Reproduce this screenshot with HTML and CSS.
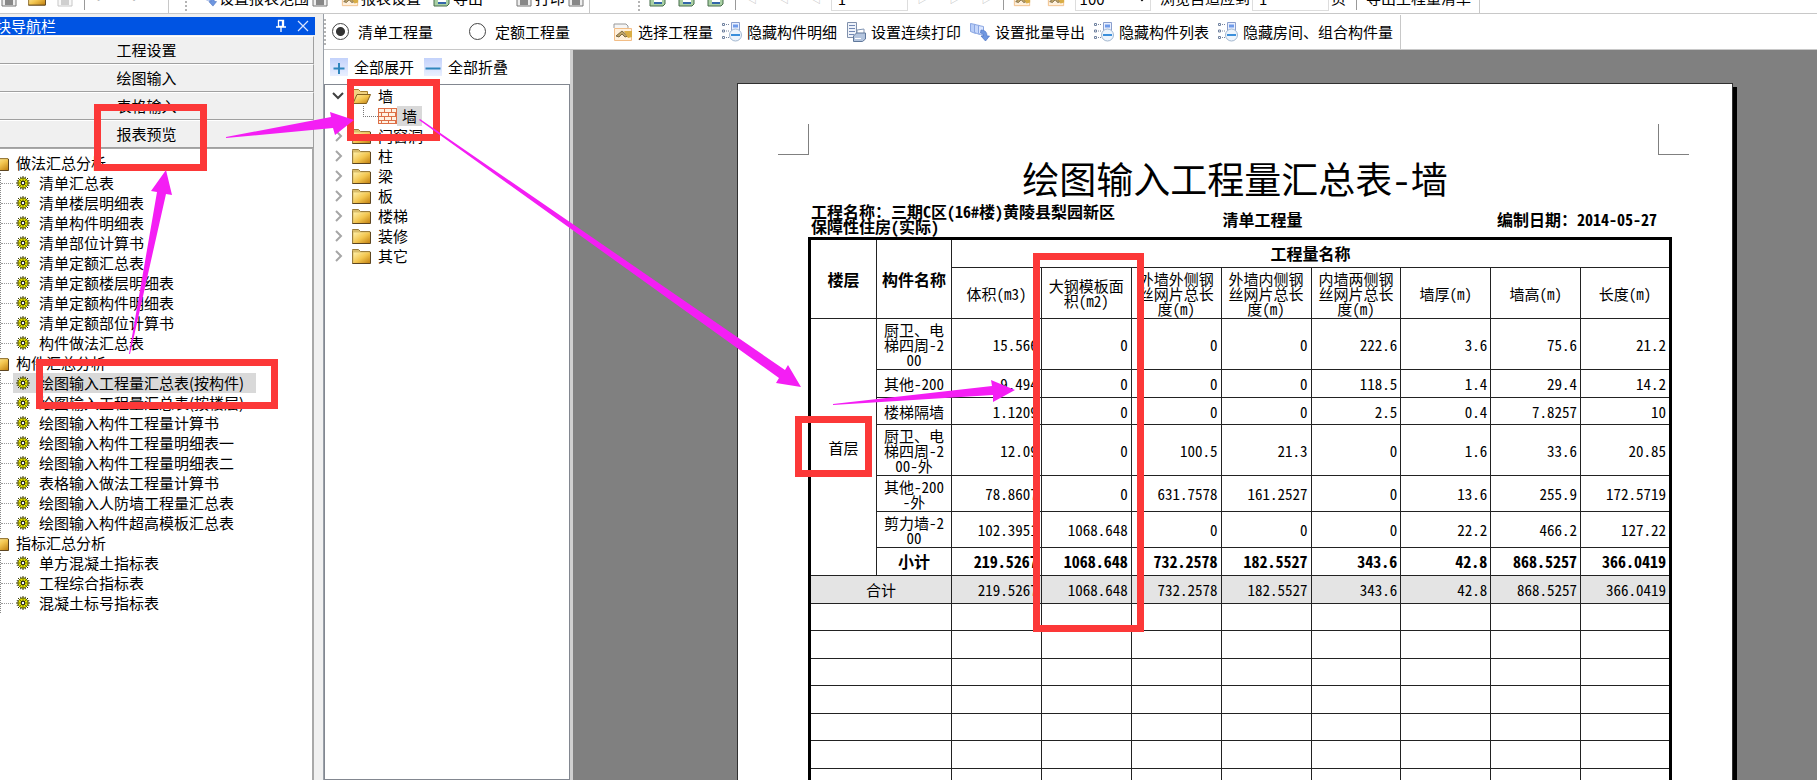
FILE: index.html
```
<!DOCTYPE html>
<html lang="zh-CN">
<head>
<meta charset="utf-8">
<title>报表预览</title>
<link rel="stylesheet" href="styles.css">
</head>
<body>
<svg class="defs" aria-hidden="true">
  <defs>
    <linearGradient id="gold" x1="0" y1="0" x2="1" y2="1"><stop offset="0" stop-color="#fff0a8"/><stop offset=".5" stop-color="#f3c650"/><stop offset="1" stop-color="#c07f10"/></linearGradient>
    <linearGradient id="sky" x1="0" y1="0" x2="0" y2="1"><stop offset="0" stop-color="#c3d2fb"/><stop offset="1" stop-color="#eaf0ff"/></linearGradient>
    <symbol id="folder" viewBox="0 0 19 16"><path d="M.5 2.500V1.500h6l2 2h9.500v12H.5z" fill="#d9bd6a" stroke="#9a7c3c"/><path d="M1.500 4.500h16.500v11H1.500z" fill="url(#gold)"/><path d="M18.500 4v11.500H.5" fill="none" stroke="#5d4520"/></symbol>
    <symbol id="folder-open" viewBox="0 0 19 16"><path d="M.5 15V1.500h6l2 2h7V7" fill="#f1d382" stroke="#a8802c"/><path d="M1 15.500L5 6.500h13.500l-4 9z" fill="url(#gold)" stroke="#83601f"/></symbol>
    <symbol id="wall" viewBox="0 0 19 16"><path d="M0 0h19v16H0z" fill="#dd7048"/><path d="M1 1h5v3H1zm6 0h6v3H7zm7 0h4v3h-4zM1 5h2v3H1zm3 0h6v3H4zm7 0h6v3h-6zM1 9h5v3H1zm6 0h6v3H7zm7 0h4v3h-4zM1 13h2v2H1zm3 0h6v2H4zm7 0h6v2h-6z" fill="#fff1e2"/></symbol>
    <symbol id="gear" viewBox="0 0 14 14"><path d="M7 0v14M0 7h14M2 2l10 10M12 2L2 12M4.500.8l5 12.400M9.500.8l-5 12.400M.8 4.500l12.400 5M.8 9.500l12.400-5" stroke="#333300" stroke-width="1"/><circle cx="7" cy="7" r="5" fill="#e8e800" stroke="#4a4a00" stroke-width=".8"/><path d="M7 1.500v3M7 9.500v3M1.500 7h3M9.500 7h3M3.500 3.500l1.500 1.500M10.500 3.500L9 5M3.500 10.500L5 9M10.500 10.500L9 9" stroke="#777700"/><circle cx="7" cy="7" r="1.800" fill="#fff" stroke="#222" stroke-width="1.200"/></symbol>
    <symbol id="plus" viewBox="0 0 18 18"><path d="M0 0h18v18H0z" fill="url(#sky)"/><path d="M9 5v11M3.500 10.500h11" stroke="#2f86bd" stroke-width="2"/></symbol>
    <symbol id="minus" viewBox="0 0 18 18"><path d="M0 0h18v18H0z" fill="url(#sky)"/><path d="M1.500 10.500h15" stroke="#2f86bd" stroke-width="2"/></symbol>
    <symbol id="pick" viewBox="0 0 20 20"><path d="M1 6V2h12l2 2v3" fill="#f5f5f5" stroke="#999"/><path d="M1.500 6.500h17v12h-17z" fill="#fff0dc" stroke="#f2bd86"/><path d="M3 14l6-5 6 5-3 1-3-3-3 3z" fill="#bda268" stroke="#7d6a42"/><path d="M11 9h8v6l-4 1z" fill="#d9ad45"/></symbol>
    <symbol id="hide" viewBox="0 0 20 20"><path d="M.5 1.500h2v2h-2zM.5 8h2v2h-2zM.5 14.500h2v2h-2z" fill="#fff" stroke="#7082a0"/><path d="M4 2.500h3M4 9h3M4 15.500h3" stroke="#7886a0" stroke-dasharray="1 1"/><path d="M9.500.5h8v10h-8z" fill="#eaf0ff" stroke="#8b9fcc"/><path d="M11 2.500h5v3h-5z" fill="#6f9bea"/><circle cx="13.500" cy="13" r="6" fill="#edf4fc" stroke="#a2b7cf"/><path d="M9 13h9" stroke="#3b8fdb" stroke-width="2"/></symbol>
    <symbol id="printer" viewBox="0 0 20 20"><path d="M1.500.5h9v15h-9z" fill="#eff3fa" stroke="#8191ac"/><path d="M3 3.500h6M3 6.500h6M3 9.500h6M3 12.500h5" stroke="#7188b4"/><path d="M11 8l7-1v6h-7z" fill="#fff" stroke="#8296b4"/><path d="M7.500 14l3-3h9v6l-3 2.500h-9z" fill="#b4c5de" stroke="#60789b"/><path d="M9 16.500h6" stroke="#fff"/></symbol>
    <symbol id="batch" viewBox="0 0 20 20"><path d="M.5 1.500l5 1v9l-5-2z" fill="#b8cdf8" stroke="#8aa6e2"/><path d="M4.500 2.500l5 1v9l-5-2z" fill="#c6d7fa" stroke="#8aa6e2"/><path d="M8.500 3.500l5 1v9l-5-2z" fill="#dbe6ff" stroke="#8aa6e2"/><path d="M11 8q6 0 6 6h2.500L15.500 19 11 14h2.500q0-3-3-3z" fill="#6f97e0" stroke="#4d76c4" stroke-width=".7"/></symbol>
    <symbol id="sheet" viewBox="0 0 18 18"><path d="M1 1h15v14l-2 2H1z" fill="#a9d0a4" stroke="#466c4a"/><path d="M5 3h8v11H5z" fill="#fff"/><path d="M5 14h8" stroke="#3467a9" stroke-width="2"/></symbol>
    <symbol id="page-icon" viewBox="0 0 18 18"><path d="M2 1h14v16H2z" fill="#eee" stroke="#777"/><path d="M5 11h8v5H5z" fill="#888"/></symbol>
  </defs>
</svg>

<header class="topbar">
  <div class="group file-group">
    <svg class="icon18"><use href="#page-icon"/></svg><svg class="icon18"><use href="#folder"/></svg><svg class="icon18 faded"><use href="#page-icon"/></svg><span class="sep"></span><span class="dim">↶</span><span class="dim">↷</span>
  </div>
  <div class="group report-group">
    <span class="grip"></span>
    <button class="tool"><svg class="icon18"><use href="#batch"/></svg>设置报表范围<svg class="icon18"><use href="#page-icon"/></svg></button>
    <button class="tool"><svg class="icon18"><use href="#pick"/></svg>报表设置</button>
    <button class="tool"><svg class="icon18"><use href="#sheet"/></svg>导出</button>
    <button class="tool print-tool"><svg class="icon18"><use href="#page-icon"/></svg>打印<svg class="icon18"><use href="#page-icon"/></svg></button>
  </div>
  <div class="group view-group">
    <span class="grip"></span>
    <span class="sheets"><svg class="icon18"><use href="#sheet"/></svg><svg class="icon18"><use href="#sheet"/></svg><svg class="icon18"><use href="#sheet"/></svg></span>
    <span class="sep"></span>
    <span class="pager"><span>◁</span><span>◁</span><span>◁</span></span>
    <input class="page-input" aria-label="页码" value="1">
    <span class="pager"><span>▷</span><span>▷</span><span>▷</span></span>
    <span class="sep"></span>
    <span class="lenses"><svg class="icon18"><use href="#pick"/></svg><svg class="icon18"><use href="#pick"/></svg></span>
    <select class="zoom-select" aria-label="缩放"><option>100</option></select>
    <label class="fit">浏览自适应到<input class="page-input" value="1">页</label>
    <span class="sep"></span>
    <button class="tool">导出工程量清单</button>
  </div>
</header>

<div class="app">
  <aside class="nav">
    <div class="nav-title"><span class="nav-name">块导航栏</span>
      <button class="tiny" aria-label="固定"><svg viewBox="0 0 12 14"><path d="M3.500 1.500h5v6h-5zM1 8h10M6 8v5M7.500 2v5" fill="none" stroke="#fff" stroke-width="1.300"/></svg></button>
      <button class="tiny" aria-label="关闭"><svg viewBox="0 0 12 14"><path d="M1 2l10 10M11 2L1 12" stroke="#d8e4ff" stroke-width="1.200"/></svg></button>
    </div>
    <button class="module">工程设置</button>
    <button class="module">绘图输入</button>
    <button class="module">表格输入</button>
    <button class="module">报表预览</button>
    <div class="reports">
      <h3><svg><use href="#folder"/></svg>做法汇总分析</h3>
      <ul>
        <li><svg><use href="#gear"/></svg><a href="#">清单汇总表</a></li>
        <li><svg><use href="#gear"/></svg><a href="#">清单楼层明细表</a></li>
        <li><svg><use href="#gear"/></svg><a href="#">清单构件明细表</a></li>
        <li><svg><use href="#gear"/></svg><a href="#">清单部位计算书</a></li>
        <li><svg><use href="#gear"/></svg><a href="#">清单定额汇总表</a></li>
        <li><svg><use href="#gear"/></svg><a href="#">清单定额楼层明细表</a></li>
        <li><svg><use href="#gear"/></svg><a href="#">清单定额构件明细表</a></li>
        <li><svg><use href="#gear"/></svg><a href="#">清单定额部位计算书</a></li>
        <li><svg><use href="#gear"/></svg><a href="#">构件做法汇总表</a></li>
      </ul>
      <h3><svg><use href="#folder"/></svg>构件汇总分析</h3>
      <ul>
        <li class="selected"><svg><use href="#gear"/></svg><a href="#">绘图输入工程量汇总表(按构件)</a></li>
        <li><svg><use href="#gear"/></svg><a href="#">绘图输入工程量汇总表(按楼层)</a></li>
        <li><svg><use href="#gear"/></svg><a href="#">绘图输入构件工程量计算书</a></li>
        <li><svg><use href="#gear"/></svg><a href="#">绘图输入构件工程量明细表一</a></li>
        <li><svg><use href="#gear"/></svg><a href="#">绘图输入构件工程量明细表二</a></li>
        <li><svg><use href="#gear"/></svg><a href="#">表格输入做法工程量计算书</a></li>
        <li><svg><use href="#gear"/></svg><a href="#">绘图输入人防墙工程量汇总表</a></li>
        <li><svg><use href="#gear"/></svg><a href="#">绘图输入构件超高模板汇总表</a></li>
      </ul>
      <h3><svg><use href="#folder"/></svg>指标汇总分析</h3>
      <ul>
        <li><svg><use href="#gear"/></svg><a href="#">单方混凝土指标表</a></li>
        <li><svg><use href="#gear"/></svg><a href="#">工程综合指标表</a></li>
        <li><svg><use href="#gear"/></svg><a href="#">混凝土标号指标表</a></li>
      </ul>
    </div>
  </aside>

  <main class="work">
    <div class="toolbar">
      <span class="grip"></span>
      <label class="choice"><input type="radio" name="kind" checked>清单工程量</label>
      <label class="choice"><input type="radio" name="kind">定额工程量</label>
      <div class="actions">
        <button class="action"><svg><use href="#pick"/></svg>选择工程量</button>
        <button class="action"><svg><use href="#hide"/></svg>隐藏构件明细</button>
        <button class="action"><svg><use href="#printer"/></svg>设置连续打印</button>
        <button class="action"><svg><use href="#batch"/></svg>设置批量导出</button>
        <button class="action"><svg><use href="#hide"/></svg>隐藏构件列表</button>
        <button class="action"><svg><use href="#hide"/></svg>隐藏房间、组合构件量</button>
      </div>
    </div>
    <div class="panes">
      <section class="elements">
        <div class="fold-bar">
          <button class="fold"><svg><use href="#plus"/></svg>全部展开</button>
          <button class="fold"><svg><use href="#minus"/></svg>全部折叠</button>
        </div>
        <ul class="tree">
          <li class="open"><svg class="chev" viewBox="0 0 12 12"><path d="M1 3l5 5 5-5" /></svg><svg class="pic"><use href="#folder-open"/></svg><span>墙</span></li>
          <li class="child"><svg class="pic"><use href="#wall"/></svg><span class="chosen">墙</span></li>
          <li><svg class="chev" viewBox="0 0 12 12"><path d="M4 1l5 5-5 5"/></svg><svg class="pic"><use href="#folder"/></svg><span>门窗洞</span></li>
          <li><svg class="chev" viewBox="0 0 12 12"><path d="M4 1l5 5-5 5"/></svg><svg class="pic"><use href="#folder"/></svg><span>柱</span></li>
          <li><svg class="chev" viewBox="0 0 12 12"><path d="M4 1l5 5-5 5"/></svg><svg class="pic"><use href="#folder"/></svg><span>梁</span></li>
          <li><svg class="chev" viewBox="0 0 12 12"><path d="M4 1l5 5-5 5"/></svg><svg class="pic"><use href="#folder"/></svg><span>板</span></li>
          <li><svg class="chev" viewBox="0 0 12 12"><path d="M4 1l5 5-5 5"/></svg><svg class="pic"><use href="#folder"/></svg><span>楼梯</span></li>
          <li><svg class="chev" viewBox="0 0 12 12"><path d="M4 1l5 5-5 5"/></svg><svg class="pic"><use href="#folder"/></svg><span>装修</span></li>
          <li><svg class="chev" viewBox="0 0 12 12"><path d="M4 1l5 5-5 5"/></svg><svg class="pic"><use href="#folder"/></svg><span>其它</span></li>
        </ul>
      </section>
      <section class="viewer">
        <article class="paper">
          <div class="marks"><span class="mark left"></span><span class="mark right"></span></div>
          <h1>绘图输入工程量汇总表-墙</h1>
          <div class="meta">
            <p class="project">工程名称：三期C区(16#楼)黄陵县梨园新区<br>保障性住房(实际)</p>
            <p class="kind">清单工程量</p>
            <p class="date">编制日期：2014-05-27</p>
          </div>
          <table>
            <colgroup><col class="c-floor"><col class="c-name"><col span="8"></colgroup>
            <thead>
              <tr class="h29"><th rowspan="2">楼层</th><th rowspan="2">构件名称</th><th colspan="8">工程量名称</th></tr>
              <tr class="h51 units"><th>体积(m3)</th><th>大钢模板面<br>积(m2)</th><th>外墙外侧钢<br>丝网片总长<br>度(m)</th><th>外墙内侧钢<br>丝网片总长<br>度(m)</th><th>内墙两侧钢<br>丝网片总长<br>度(m)</th><th>墙厚(m)</th><th>墙高(m)</th><th>长度(m)</th></tr>
            </thead>
            <tbody>
              <tr class="h51"><td class="name" rowspan="7">首层</td><td class="name">厨卫、电<br>梯四周-2<br>00</td><td>15.566</td><td>0</td><td>0</td><td>0</td><td>222.6</td><td>3.6</td><td>75.6</td><td>21.2</td></tr>
              <tr class="h28"><td class="name">其他-200</td><td>9.494</td><td>0</td><td>0</td><td>0</td><td>118.5</td><td>1.4</td><td>29.4</td><td>14.2</td></tr>
              <tr class="h27"><td class="name">楼梯隔墙</td><td>1.1209</td><td>0</td><td>0</td><td>0</td><td>2.5</td><td>0.4</td><td>7.8257</td><td>10</td></tr>
              <tr class="h51"><td class="name">厨卫、电<br>梯四周-2<br>00-外</td><td>12.09</td><td>0</td><td>100.5</td><td>21.3</td><td>0</td><td>1.6</td><td>33.6</td><td>20.85</td></tr>
              <tr class="h36"><td class="name">其他-200<br>-外</td><td>78.8607</td><td>0</td><td>631.7578</td><td>161.2527</td><td>0</td><td>13.6</td><td>255.9</td><td>172.5719</td></tr>
              <tr class="h36"><td class="name">剪力墙-2<br>00</td><td>102.3951</td><td>1068.648</td><td>0</td><td>0</td><td>0</td><td>22.2</td><td>466.2</td><td>127.22</td></tr>
              <tr class="h28 subtotal"><td class="name">小计</td><td>219.5267</td><td>1068.648</td><td>732.2578</td><td>182.5527</td><td>343.6</td><td>42.8</td><td>868.5257</td><td>366.0419</td></tr>
              <tr class="h28 total"><td class="name" colspan="2">合计</td><td>219.5267</td><td>1068.648</td><td>732.2578</td><td>182.5527</td><td>343.6</td><td>42.8</td><td>868.5257</td><td>366.0419</td></tr>
              <tr class="h27"><td colspan="2"></td><td></td><td></td><td></td><td></td><td></td><td></td><td></td><td></td></tr>
              <tr class="h28"><td colspan="2"></td><td></td><td></td><td></td><td></td><td></td><td></td><td></td><td></td></tr>
              <tr class="h27"><td colspan="2"></td><td></td><td></td><td></td><td></td><td></td><td></td><td></td><td></td></tr>
              <tr class="h28"><td colspan="2"></td><td></td><td></td><td></td><td></td><td></td><td></td><td></td><td></td></tr>
              <tr class="h27"><td colspan="2"></td><td></td><td></td><td></td><td></td><td></td><td></td><td></td><td></td></tr>
              <tr class="h28"><td colspan="2"></td><td></td><td></td><td></td><td></td><td></td><td></td><td></td><td></td></tr>
              <tr class="h27"><td colspan="2"></td><td></td><td></td><td></td><td></td><td></td><td></td><td></td><td></td></tr>
              <tr class="h28"><td colspan="2"></td><td></td><td></td><td></td><td></td><td></td><td></td><td></td><td></td></tr>
            </tbody>
          </table>
        </article>
      </section>
    </div>
  </main>
</div>

<svg class="callouts" width="1817" height="780" viewBox="0 0 1817 780" aria-hidden="true">
  <g fill="none" stroke="#fc3838" stroke-width="7">
    <path d="M97.500 107.500h106v60h-106z"/>
    <path d="M350.500 82.500h86v55h-86z"/>
    <path d="M39.500 362.500h235v43h-235z"/>
    <path d="M798.500 419.500h70v54h-70z"/>
    <path d="M1036.500 256.500h104v372h-104z"/>
  </g>
  <g fill="#f41ef4">
    <path d="M226 137l105-20-1-5 24 8-19 15-2-7-107 10z"/>
    <path d="M129 354l28-162-6-1 15-21 6 25-6-1-36 160z"/>
    <path d="M420 119L785 370l3-5 13 22-25-4 3-5L419 120z"/>
    <path d="M833 404l159-18-1-6 24 10-22 12v-7l-160 10z"/>
  </g>
</svg>
</body>
</html>
```
FILE: styles.css
```
* { box-sizing: border-box; }

body {
  margin: 0;
  height: 100vh;
  display: flex;
  flex-direction: column;
  overflow: hidden;
  position: relative;
  background: #fff;
  color: #000;
  font: 15px/20px "Noto Sans CJK SC", sans-serif;
}

button, input, select { font: inherit; color: inherit; }
button { border: 0; padding: 0; background: none; white-space: nowrap; }
ul { list-style: none; margin: 0; padding: 0; }
p, h1, h3 { margin: 0; }
svg { flex: none; }
.defs { position: absolute; width: 0; height: 0; }

/* main toolbar, scrolled partly out of view */
.topbar {
  flex: none;
  display: flex;
  height: 31px;
  margin-top: -17px;
  border-bottom: 1px solid #c8c8c8;
}
.group { display: flex; align-items: center; gap: 8px; padding: 0 8px; border-right: 1px solid #c8c8c8; }
.file-group { width: 169px; padding: 0; gap: 10px; }
.report-group { width: 421px; padding-left: 16px; gap: 12px; }
.view-group { width: 890px; padding-left: 48px; justify-content: space-between; }
.icon18 { width: 18px; height: 18px; }
.faded { opacity: .4; }
.dim { color: #bbb; width: 20px; }
.sep { width: 1px; height: 24px; background: #999; }
.grip { width: 2px; height: 26px; border-left: 2px dotted #b4b4b4; }
.tool { display: flex; align-items: center; gap: 2px; }
.print-tool { margin-left: 20px; }
.sheets { display: flex; gap: 11px; }
.lenses { display: flex; gap: 16px; }
.pager { display: flex; gap: 20px; color: #c4c4c4; font-size: 12px; }
.page-input { width: 77px; height: 26px; padding: 0 6px; border: 1px solid #ddd; }
.zoom-select { width: 76px; height: 26px; border: 1px solid #ddd; background: #fff; }
.fit { display: flex; align-items: center; gap: 2px; white-space: nowrap; }

.app { flex: 1; min-height: 0; display: flex; }

/* navigation column */
.nav {
  flex: none;
  width: 324px;
  padding: 3px 8px 0 0;
  display: flex;
  flex-direction: column;
  background: #f0f0f0;
  border-right: 1px solid #9aa0a8;
}
.nav-title {
  display: flex;
  align-items: center;
  gap: 10px;
  height: 18px;
  margin-bottom: 1px;
  padding-right: 6px;
  background: #0054e3;
  color: #fff;
}
.nav-name { flex: 1; margin-left: -4px; line-height: 18px; }
.tiny { width: 12px; height: 14px; display: flex; }
.tiny svg { width: 12px; height: 14px; }
.module {
  height: 28px;
  padding-left: 0;
  margin-right: 1px;
  padding-right: 20px;
  background: #f0f0f0;
  border: 1px solid #a0a0a0;
  border-top-color: #fff;
  border-left: 0;
  text-align: center;
  line-height: 24px;
}
.reports {
  flex: 1;
  margin-right: 1px;
  padding-top: 4px;
  background: #fff;
  border-top: 1px solid #a8a8a8;
  border-right: 2px solid #a8a8a8;
  overflow: hidden;
}
.reports h3 { display: flex; align-items: center; gap: 7px; height: 20px; margin-left: -10px; font-size: 15px; font-weight: 400; }
.reports h3 svg { width: 19px; height: 16px; }
.reports ul { border-left: 1px dotted #888; }
.reports li { display: flex; align-items: center; height: 20px; }
.reports li::before { content: ""; width: 12px; border-top: 1px dotted #999; }
.reports li svg { width: 14px; height: 14px; margin: 0 9px 0 3px; }
.reports a { color: inherit; text-decoration: none; white-space: nowrap; }
.selected { width: 255px; background: linear-gradient(90deg, #fff 12px, #d9d9d9 12px); }

/* work area */
.work { flex: 1; min-width: 0; display: flex; flex-direction: column; }
.toolbar { flex: none; display: flex; align-items: center; height: 36px; border-bottom: 1px solid #c8c8c8; }
.choice { display: flex; align-items: center; gap: 9px; margin-left: 6px; width: 131px; white-space: nowrap; }
.choice input {
  appearance: none;
  width: 17px;
  height: 17px;
  margin: 0;
  border: 1px solid #444;
  border-radius: 50%;
  background: #fff;
}
.choice input:checked { background: radial-gradient(circle, #333 4px, #fff 5px); }
.actions { display: flex; align-items: center; gap: 9px; height: 34px; margin-left: 13px; padding-right: 7px; border-right: 1px solid #c8c8c8; }
.action { display: flex; align-items: center; gap: 5px; }
.action svg { width: 20px; height: 20px; }

.panes { flex: 1; min-height: 0; display: flex; }
.elements { flex: none; width: 249px; display: flex; flex-direction: column; border-right: 3px solid #d0d0d0; }
.fold-bar { display: flex; align-items: center; gap: 10px; height: 34px; padding: 0 6px; }
.fold { display: flex; align-items: center; gap: 6px; }
.fold svg { width: 18px; height: 18px; }
.tree { flex: 1; padding: 1px 0 0 7px; border: 1px solid #828790; }
.tree li { display: flex; align-items: center; height: 20px; }
.chev { width: 12px; height: 12px; margin-right: 8px; fill: none; stroke: #a6a6a6; stroke-width: 2; }
.open .chev { stroke: #404040; }
.pic { width: 19px; height: 16px; margin-right: 7px; }
.tree .child { padding-left: 31px; }
.child::before { content: ""; width: 14px; height: 10px; margin: -10px 0 0; border-left: 1px dotted #777; border-bottom: 1px dotted #777; }
.child .pic { margin-right: 0; }
.chosen { padding: 0 5px; background: #d9d9d9; }

/* report page */
.viewer { flex: 1; min-width: 0; display: flex; padding: 33px 84px 0 164px; background: #808080; overflow: hidden; }
.paper {
  flex: 1;
  min-width: 0;
  height: 1400px;
  border: 1px solid #303030;
  background: #fff;
  box-shadow: 4px 4px 0 #000;
  font-family: "Noto Sans Mono CJK SC", "Noto Sans CJK SC", monospace;
}
.marks { display: flex; justify-content: space-between; padding: 40px 43px 0 40px; }
.mark { width: 31px; height: 31px; border-bottom: 1px solid #808080; }
.mark.left { border-right: 1px solid #808080; }
.mark.right { border-left: 1px solid #808080; }
h1 { font-size: 37px; line-height: 46px; font-weight: 500; text-align: center; }
.meta { display: flex; justify-content: space-between; align-items: center; height: 36px; padding: 0 75px 0 73px; font-size: 16px; line-height: 15px; font-weight: 700; }
.meta p { flex: 1; white-space: nowrap; }
.meta .kind { text-align: center; padding-left: 16px; }
.date { text-align: right; }

table {
  width: calc(100% - 130px);
  margin: 0 60px 0 70px;
  table-layout: fixed;
  border-collapse: collapse;
  border: 3px solid #000;
}
.c-floor { width: 67px; }
.c-name { width: 75px; }
th, td { padding: 0 3px 0 0; border: 1px solid #222; line-height: 15px; white-space: nowrap; }
th { font-size: 16px; font-weight: 700; padding: 0; }
td { text-align: right; font-weight: 400; }
.units th { font-size: 15px; font-weight: 400; }
.name { text-align: center; padding: 0; }
.h51 { height: 51px; }
.h36 { height: 36px; }
.h29 { height: 29px; }
.h28 { height: 28px; }
.h27 { height: 27px; }
.subtotal td { font-weight: 700; font-size: 16px; }
.total { background: #e4e4e4; }

.callouts { position: absolute; left: 0; top: 0; pointer-events: none; }
```
